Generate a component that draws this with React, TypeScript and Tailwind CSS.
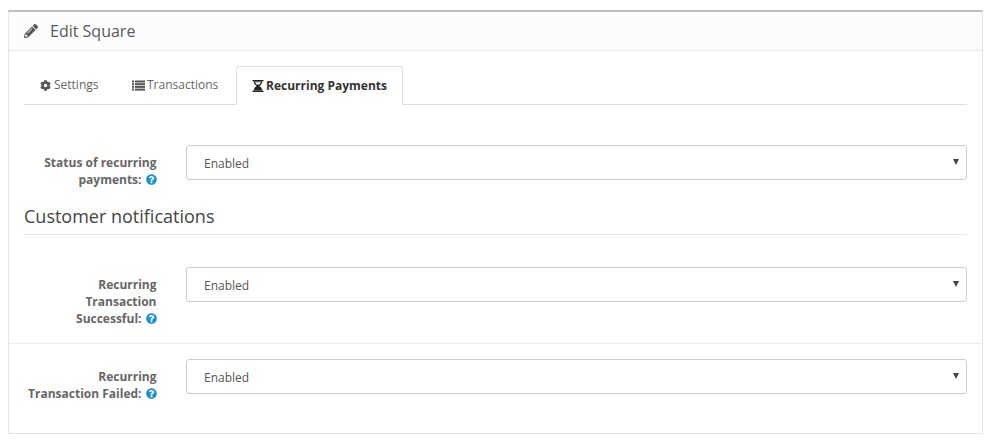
import { FaPencilAlt, FaCog, FaQuestionCircle } from "react-icons/fa";

function ListIcon() {
  return (
    <svg width="13" height="11" viewBox="0 0 13 11" fill="#555555">
      <rect x="0" y="0.5" width="2" height="2" />
      <rect x="3" y="0.5" width="10" height="2" />
      <rect x="0" y="3.2" width="2" height="2" />
      <rect x="3" y="3.2" width="10" height="2" />
      <rect x="0" y="5.9" width="2" height="2" />
      <rect x="3" y="5.9" width="10" height="2" />
      <rect x="0" y="8.6" width="2" height="2" />
      <rect x="3" y="8.6" width="10" height="2" />
    </svg>
  );
}

function HourglassIcon() {
  return (
    <svg width="12" height="12" viewBox="0 0 12 12" fill="#222222">
      <rect x="0.5" y="0" width="11" height="1.4" />
      <rect x="0.5" y="10.6" width="11" height="1.4" />
      <path d="M1.8 1.4h8.4c0 2-1 3.4-2.9 4.6 1.9 1.2 2.9 2.6 2.9 4.6H1.8c0-2 1-3.4 2.9-4.6C2.8 4.8 1.8 3.4 1.8 1.4z" />
      <path d="M3.2 2.2h5.6c-.2 1-.7 1.7-1.4 2.3H4.6c-.7-.6-1.2-1.3-1.4-2.3z" fill="#ffffff" />
    </svg>
  );
}

function Tab({ icon, label, active, className }: { icon: React.ReactNode; label: string; active?: boolean; className?: string }) {
  return (
    <div
      className={
        active
          ? "relative -mb-px h-[39px] px-[15px] flex items-center gap-[2px] border border-[#dddddd] border-b-white bg-white rounded-t-[3px] font-bold text-[#333333]"
          : `h-[38px] mr-[2px] flex items-center text-[#666666] ${className ?? ""}`
      }
    >
      {icon}
      <span>{label}</span>
    </div>
  );
}

function Row({ lines, border, className }: { lines: string[]; border?: boolean; className: string }) {
  return (
    <div className={`flex ${border ? "border-t border-[#ededed] -mx-[15px] px-[15px]" : ""} ${className}`}>
      <div className="w-[132.5px] shrink-0 text-right font-bold text-[#666666] leading-[17px] pt-[9px]">
        {lines.map((l, i) => (
          <div key={i}>
            {l}
            {i === lines.length - 1 && (
              <FaQuestionCircle className="inline-block ml-[4px] -mt-[2px] text-[11px] text-[#1e91cf]" />
            )}
          </div>
        ))}
      </div>
      <div className="ml-[29.5px] flex-1 h-[35px] relative flex items-center border border-[#cccccc] rounded-[3px] bg-white pl-[17px] pt-[2px] text-[#555555]">
        Enabled
        <span className="absolute right-[7px] top-[13px] w-0 h-0 border-x-[3px] border-x-transparent border-t-[6px] border-t-[#444444]" />
      </div>
    </div>
  );
}

export default function App() {
  return (
    <div className="w-[993px] h-[448px] bg-white pt-[10px] pl-[8px] pr-[10px] text-[12px] font-['Open_Sans',sans-serif]">
      <div className="h-[424px] border border-[#e5e5e5] border-t-2 border-t-[#bfbfbf]">
        <div className="h-[39px] flex items-center pl-[15px] bg-[#fcfcfc] border-b border-[#e8e8e8] text-[#595959] text-[16px]">
          <FaPencilAlt className="text-[14px] text-[#555555] mr-[12px]" />
          <span>Edit Square</span>
        </div>
        <div className="px-[15px] pt-[15px]">
          <div className="flex border-b border-[#dddddd] h-[39px]">
            <Tab className="w-[89px] pl-[16px] gap-[3px]" icon={<FaCog className="text-[11px] text-[#555555]" />} label="Settings" />
            <Tab className="w-[119px] pl-[17px] gap-[2px]" icon={<ListIcon />} label="Transactions" />
            <Tab active icon={<HourglassIcon />} label="Recurring Payments" />
          </div>
          <Row lines={["Status of recurring", "payments:"]} className="mt-[40px]" />
          <div className="mt-[15px] h-[32px] border-b border-[#e5e5e5] text-[18px] leading-[27px] text-[#444444]">
            Customer notifications
          </div>
          <Row lines={["Recurring", "Transaction", "Successful:"]} className="mt-[32px] h-[76px]" />
          <Row lines={["Recurring", "Transaction Failed:"]} border className="pt-[15px]" />
        </div>
      </div>
    </div>
  );
}
